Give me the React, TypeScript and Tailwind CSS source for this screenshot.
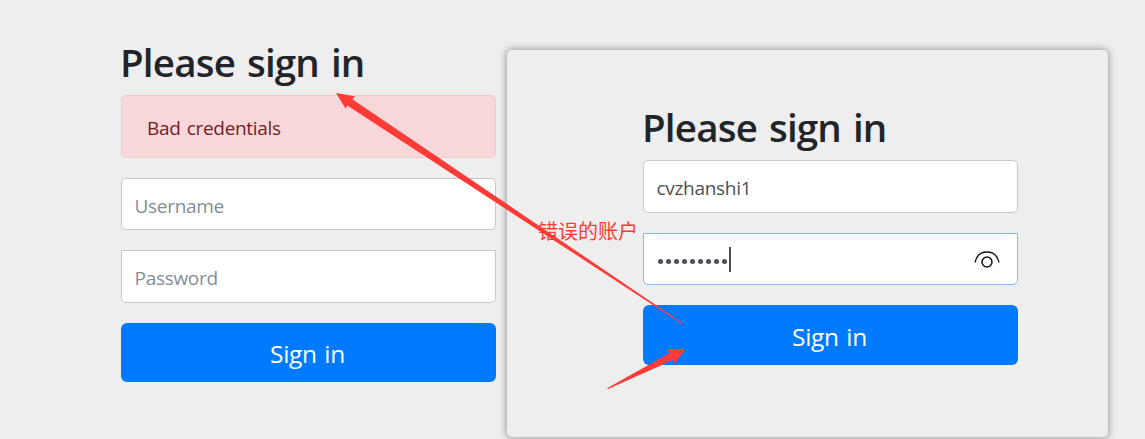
const heading = "relative -left-px -top-px h-[38px] whitespace-nowrap text-[38.5px] font-semibold leading-[38px] tracking-[-0.8px] [word-spacing:2.7px] text-[#212529]";
const field = "flex w-full items-center border bg-white px-[12.5px] text-[19px] tracking-[-0.3px]";
const button = "block w-full rounded-[6px] bg-[#007bff] text-center text-[24.5px] tracking-[-0.3px] text-white [word-spacing:1.5px]";

function ErrorForm() {
  return (
    <form className="ml-[121px] mt-[44px] w-[375px] shrink-0">
      <h2 className={heading}>Please sign in</h2>
      <div className="mt-[13px] flex h-[63px] items-center rounded-[5px] border border-[#f5c6cb] bg-[#f8d7da] pl-[25px] pt-[4px] text-[19px] tracking-[-0.3px] text-[#721c24] [word-spacing:1.5px]">
        Bad credentials
      </div>
      <div className={`${field} mt-5 h-[52px] rounded-[5px] border-[#c8c8c8] pt-[4px] text-[#868e96]`}>Username</div>
      <div className={`${field} mt-5 h-[53px] rounded-b-[5px] border-[#c8c8c8] pt-[3px] text-[#868e96]`}>Password</div>
      <button type="button" className={`${button} mt-5 h-[59px] pt-[4px] pr-[2px]`}>Sign in</button>
    </form>
  );
}

function EyeIcon() {
  return (
    <svg className="mr-[5px] mt-[2px] h-5 w-[26px]" viewBox="0 0 26 20" fill="none" stroke="#111" strokeWidth="1.5">
      <path d="M1 12.3C2.5 5.8 7 2 13 2s10.5 3.8 12 10.3" />
      <circle cx="13" cy="12" r="5" />
    </svg>
  );
}

function FilledForm() {
  return (
    <div className="ml-[11px] mt-[50px] h-[387px] w-[601px] shrink-0 rounded-[5px] bg-[#eee] pl-[136px] pt-[59px] shadow-[0_0_7px_1px_rgba(0,0,0,0.36)]">
      <form className="w-[375px]">
        <h2 className={heading}>Please sign in</h2>
        <div className={`${field} mt-[13px] h-[53px] rounded-[5px] border-[#c8c8c8] pt-[3px] text-[#495057]`}>cvzhanshi1</div>
        <div className={`${field} mt-5 h-[52px] justify-between rounded-b-[5px] border-[#80bdff]`}>
          <div className="flex items-center">
            <div className="flex gap-[3.1px] pl-[1px] pt-[4px]">
              {Array.from({ length: 9 }, (_, i) => (
                <span key={i} className="h-[5px] w-[5px] rounded-full bg-[#495057]" />
              ))}
            </div>
            <span className="ml-[1.5px] h-[25px] w-[2px] bg-[#495057]" />
          </div>
          <EyeIcon />
        </div>
        <button type="button" className={`${button} mt-5 h-[60px] pt-[5px] pr-[2px]`}>Sign in</button>
      </form>
    </div>
  );
}

export default function App() {
  return (
    <main className="relative flex h-[439px] w-[1145px] items-start overflow-hidden bg-[#eee] font-['Open_Sans','Noto_Sans',sans-serif]">
      <ErrorForm />
      <FilledForm />
      <svg className="pointer-events-none absolute inset-0 h-full w-full" viewBox="0 0 1145 439" fill="#ff3b38">
        <path d="M336 93L355 96.3L352.3 99.2L682.7 323.2L684 324.6L682 324L347.3 105.5L345.7 108.8Z" />
        <path d="M685.5 349L667 349L669.3 353.3L607 388.2L608 389L673 360L674.7 363.7Z" />
      </svg>
      <span className="absolute left-[538px] top-[217px] whitespace-nowrap font-['Noto_Sans_CJK_SC',sans-serif] text-[20px] font-normal leading-[28px] text-[#ff3b38]">错误的账户</span>
    </main>
  );
}
